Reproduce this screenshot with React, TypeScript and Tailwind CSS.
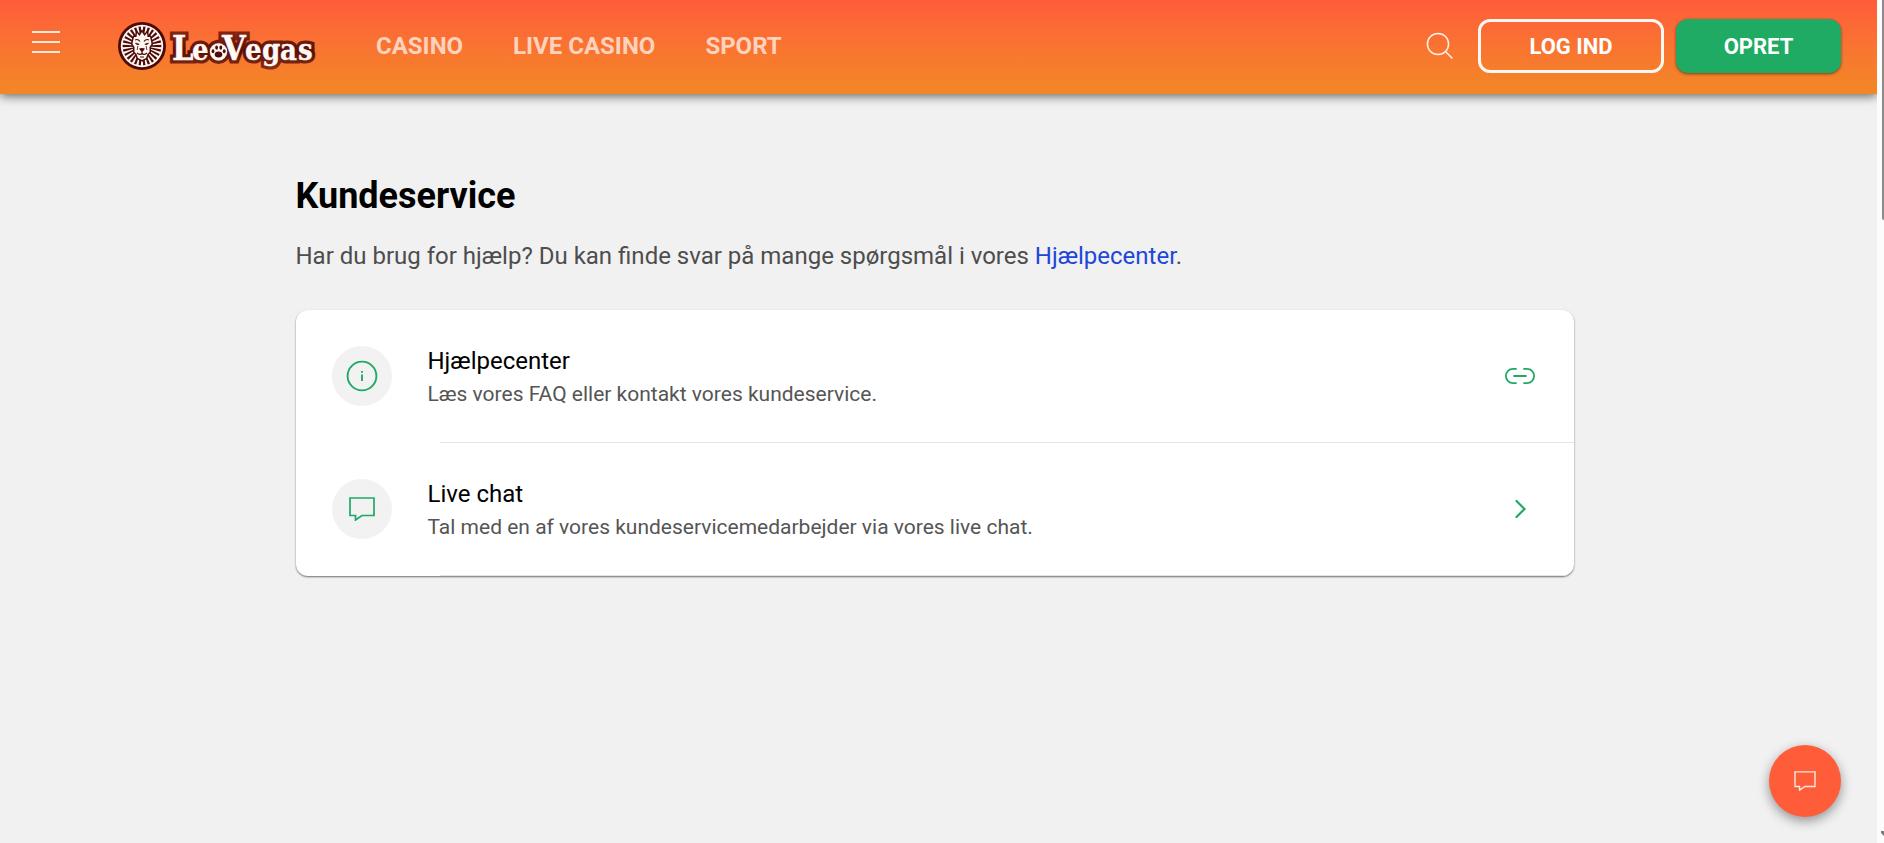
import type { ReactNode } from 'react'

const navLinks = ['CASINO', 'LIVE CASINO', 'SPORT']

// light strands of the lion's mane, spread round the face
const strands = Array.from({ length: 26 }, (_, i) => (i * 360) / 26)

function Lion() {
  return (
    <g transform="translate(26 26)">
      <circle r="24" fill="#4d0b08" />
      <circle r="21.2" fill="#fff7f2" />
      <circle r="19.4" fill="#4d0b08" />
      {strands.map((a) => (
        <path key={a} d="M-0.4 -9 L-1.2 -20 L1.2 -20 L0.4 -9Z" fill="#fff7f2" transform={`rotate(${a})`} />
      ))}
      <path
        d="M-8 -9 L-5.5 -9 L-5 -13 L-2.5 -10 L0 -14 L2.5 -10 L5 -13 L5.5 -9 L8 -9 L9 -5 L9.5 -2 L7.5 1 L7.5 6 L5.5 8 L4 12 L0 14 L-4 12 L-5.5 8 L-7.5 6 L-7.5 1 L-9.5 -2 L-9 -5Z"
        fill="#fff7f2"
        stroke="#4d0b08"
        strokeWidth="3"
        paintOrder="stroke"
      />
      <path d="M-7 -6 Q-4 -7.5 -2 -4.5 M7 -6 Q4 -7.5 2 -4.5" stroke="#4d0b08" strokeWidth="1.2" fill="none" />
      <path d="M-6.5 -3 L-2.8 -1.8 L-5 -1.2Z M6.5 -3 L2.8 -1.8 L5 -1.2Z" fill="#4d0b08" stroke="#4d0b08" strokeWidth="0.7" />
      <path d="M-3 2.5 Q0 1.6 3 2.5 L0.9 5.5 L-0.9 5.5Z" fill="#4d0b08" />
      <path d="M0 5 V7.5 M-5 7 Q-2 9.5 0 7.5 Q2 9.5 5 7 M-2 11 H2" stroke="#4d0b08" strokeWidth="1.2" fill="none" />
      <path d="M-4.2 0 L-4.8 4 M4.2 0 L4.8 4" stroke="#4d0b08" strokeWidth="0.8" />
    </g>
  )
}

function Wordmark() {
  return (
    <>
      <text y="40" fontSize="29">
        <tspan x="56" fontSize="34">L</tspan>
        <tspan x="76">e</tspan>
      </text>
      <circle cx="102.5" cy="31.8" r="8.6" />
      <text y="40" fontSize="29">
        <tspan x="106" fontSize="34">V</tspan>
        <tspan x="129">e</tspan>
        <tspan x="146">g</tspan>
        <tspan x="164">a</tspan>
        <tspan x="182">s</tspan>
      </text>
    </>
  )
}

function Logo() {
  return (
    <svg
      width="200"
      height="52"
      viewBox="0 0 200 52"
      role="img"
      aria-label="LeoVegas"
      className="overflow-visible font-['DejaVu_Serif_Condensed','DejaVu_Serif',serif] font-bold"
    >
      <defs>
        <linearGradient id="outline" gradientUnits="userSpaceOnUse" x1="0" y1="10" x2="0" y2="50">
          <stop offset="0" stopColor="#8a2512" />
          <stop offset="0.55" stopColor="#5a0f08" />
          <stop offset="1" stopColor="#8f3012" />
        </linearGradient>
      </defs>
      <Lion />
      <g fill="url(#outline)" stroke="url(#outline)" strokeWidth="7">
        <Wordmark />
      </g>
      <g fill="#fff8f4" stroke="#fff8f4" strokeWidth="0.3">
        <Wordmark />
      </g>
      <g fill="#4d0b08">
        <ellipse cx="102.5" cy="34.4" rx="3.8" ry="3" />
        <ellipse cx="97" cy="31.2" rx="1.4" ry="2" />
        <ellipse cx="100.6" cy="27.6" rx="1.4" ry="2.2" />
        <ellipse cx="104.8" cy="27.6" rx="1.4" ry="2.2" />
        <ellipse cx="108.2" cy="31.2" rx="1.4" ry="2" />
      </g>
    </svg>
  )
}

function ChatIcon({ className }: { className: string }) {
  return (
    <svg viewBox="0 0 26 24" fill="none" stroke="currentColor" className={className} aria-hidden="true">
      <path d="M1 1H25V18.5H13L6.5 23V18.5H1Z" />
    </svg>
  )
}

function InfoIcon() {
  return (
    <svg width="32" height="32" viewBox="0 0 32 32" fill="none" stroke="currentColor" strokeWidth="1.9" aria-hidden="true">
      <circle cx="16" cy="16" r="14.4" />
      <path d="M16 14.5V21M16 11V12.8" />
    </svg>
  )
}

function LinkIcon() {
  return (
    <svg width="32" height="18" viewBox="0 0 32 18" fill="none" stroke="currentColor" strokeWidth="1.8" strokeLinecap="round" aria-hidden="true">
      <path d="M12 1.9H9A7.1 7.1 0 0 0 9 16.1H12M20 1.9H23A7.1 7.1 0 0 1 23 16.1H20M10 9H22" />
    </svg>
  )
}

function ChevronIcon() {
  return (
    <svg width="32" height="20" viewBox="0 0 32 20" fill="none" stroke="currentColor" strokeWidth="2.2" strokeLinecap="round" aria-hidden="true">
      <path d="M12.5 2L20.5 10L12.5 18" />
    </svg>
  )
}

type RowProps = { icon: ReactNode; title: string; text: string; end: ReactNode }

function Row({ icon, title, text, end }: RowProps) {
  return (
    <li>
      <a href="#" className="flex h-[132px] items-center pr-[38px] pl-9">
        <span className="flex size-[60px] shrink-0 items-center justify-center rounded-full bg-[#f2f2f2] text-[#1fa965]">{icon}</span>
        <span className="ml-9 flex-1 pt-[2px]">
          <span className="block text-[24px] leading-[34px] text-black">{title}</span>
          <span className="block text-[21px] leading-[32px] text-[#555]">{text}</span>
        </span>
        <span className="text-[#1fa965]">{end}</span>
      </a>
      <div className="ml-36 h-px bg-[#e4e4e4]" />
    </li>
  )
}

export default function App() {
  return (
    <div className="flex min-h-screen bg-[#f1f1f1] font-[Roboto,sans-serif]">
      <div className="min-w-0 flex-1">
        <header className="flex h-[94px] items-center bg-linear-to-b from-[#ff5c3a] to-[#f28824] pr-9 pb-[2px] pl-8 shadow-[0_2px_10px_rgba(0,0,0,0.6)]">
          <button type="button" aria-label="Menu" className="mb-2 flex w-7 flex-col gap-2">
            <span className="h-[2px] w-full bg-[#ffe9df]" />
            <span className="h-[2px] w-full bg-[#ffe9df]" />
            <span className="h-[2px] w-full bg-[#ffe9df]" />
          </button>
          <a href="#" className="ml-14">
            <Logo />
          </a>
          <nav className="ml-15 flex gap-[50px] text-[24px] leading-8 font-bold text-[#ffd2bd]">
            {navLinks.map((label) => (
              <a key={label} href="#" className="whitespace-nowrap">{label}</a>
            ))}
          </nav>
          <div className="ml-auto flex items-center">
            <button type="button" aria-label="Søg" className="mr-6 text-[#fff1e8]">
              <svg width="28" height="28" viewBox="0 0 28 28" fill="none" stroke="currentColor" strokeWidth="1.5">
                <circle cx="12" cy="12" r="10.6" />
                <path d="M19.5 19.5L26.5 26.5" />
              </svg>
            </button>
            <button type="button" className="h-[54px] w-[186px] rounded-xl border-3 border-[#fff8f2] text-[22px] font-bold text-white">LOG IND</button>
            <button type="button" className="ml-3 h-[54px] w-[165px] rounded-xl bg-[#1fab63] text-[22px] font-bold text-white shadow-[0_1px_3px_rgba(0,0,0,0.5)]">OPRET</button>
          </div>
        </header>

        <main className="pt-20 pr-2">
          <div className="mx-auto max-w-[1278px]">
            <h1 className="text-[36px] leading-[44px] font-bold text-black">Kundeservice</h1>
            <p className="mt-5 text-[24px] leading-[36px] text-[#4d4d4d]">
              Har du brug for hjælp? Du kan finde svar på mange spørgsmål i vores{' '}
              <a href="#" className="text-[#2046d8]">Hjælpecenter</a>.
            </p>
            <ul className="mt-9 overflow-hidden rounded-xl bg-white shadow-[0_1px_2px_rgba(0,0,0,0.55)]">
              <Row icon={<InfoIcon />} title="Hjælpecenter" text="Læs vores FAQ eller kontakt vores kundeservice." end={<LinkIcon />} />
              <Row
                icon={<ChatIcon className="h-6 w-[26px] stroke-[1.7]" />}
                title="Live chat"
                text="Tal med en af vores kundeservicemedarbejder via vores live chat."
                end={<ChevronIcon />}
              />
            </ul>
          </div>
        </main>
      </div>

      {/* scroll track */}
      <div className="flex w-[7px] flex-col items-end justify-between bg-[#fcfcfc]">
        <div className="h-[220px] w-[2px] rounded-bl-sm bg-[#8a8a8a]" />
        <svg width="3" height="12" viewBox="0 0 3 12" fill="#7a7a7a" aria-hidden="true">
          <path d="M0 0H3V5L0 2Z" />
        </svg>
      </div>

      <button
        type="button"
        aria-label="Åbn chat"
        className="fixed right-[43px] bottom-[26px] flex size-[72px] items-center justify-center rounded-full bg-[#ff5c3a] text-[#ffe9e2] shadow-[0_4px_12px_rgba(0,0,0,0.4)]"
      >
        <ChatIcon className="h-5 w-[22px] stroke-[1.7]" />
      </button>
    </div>
  )
}
